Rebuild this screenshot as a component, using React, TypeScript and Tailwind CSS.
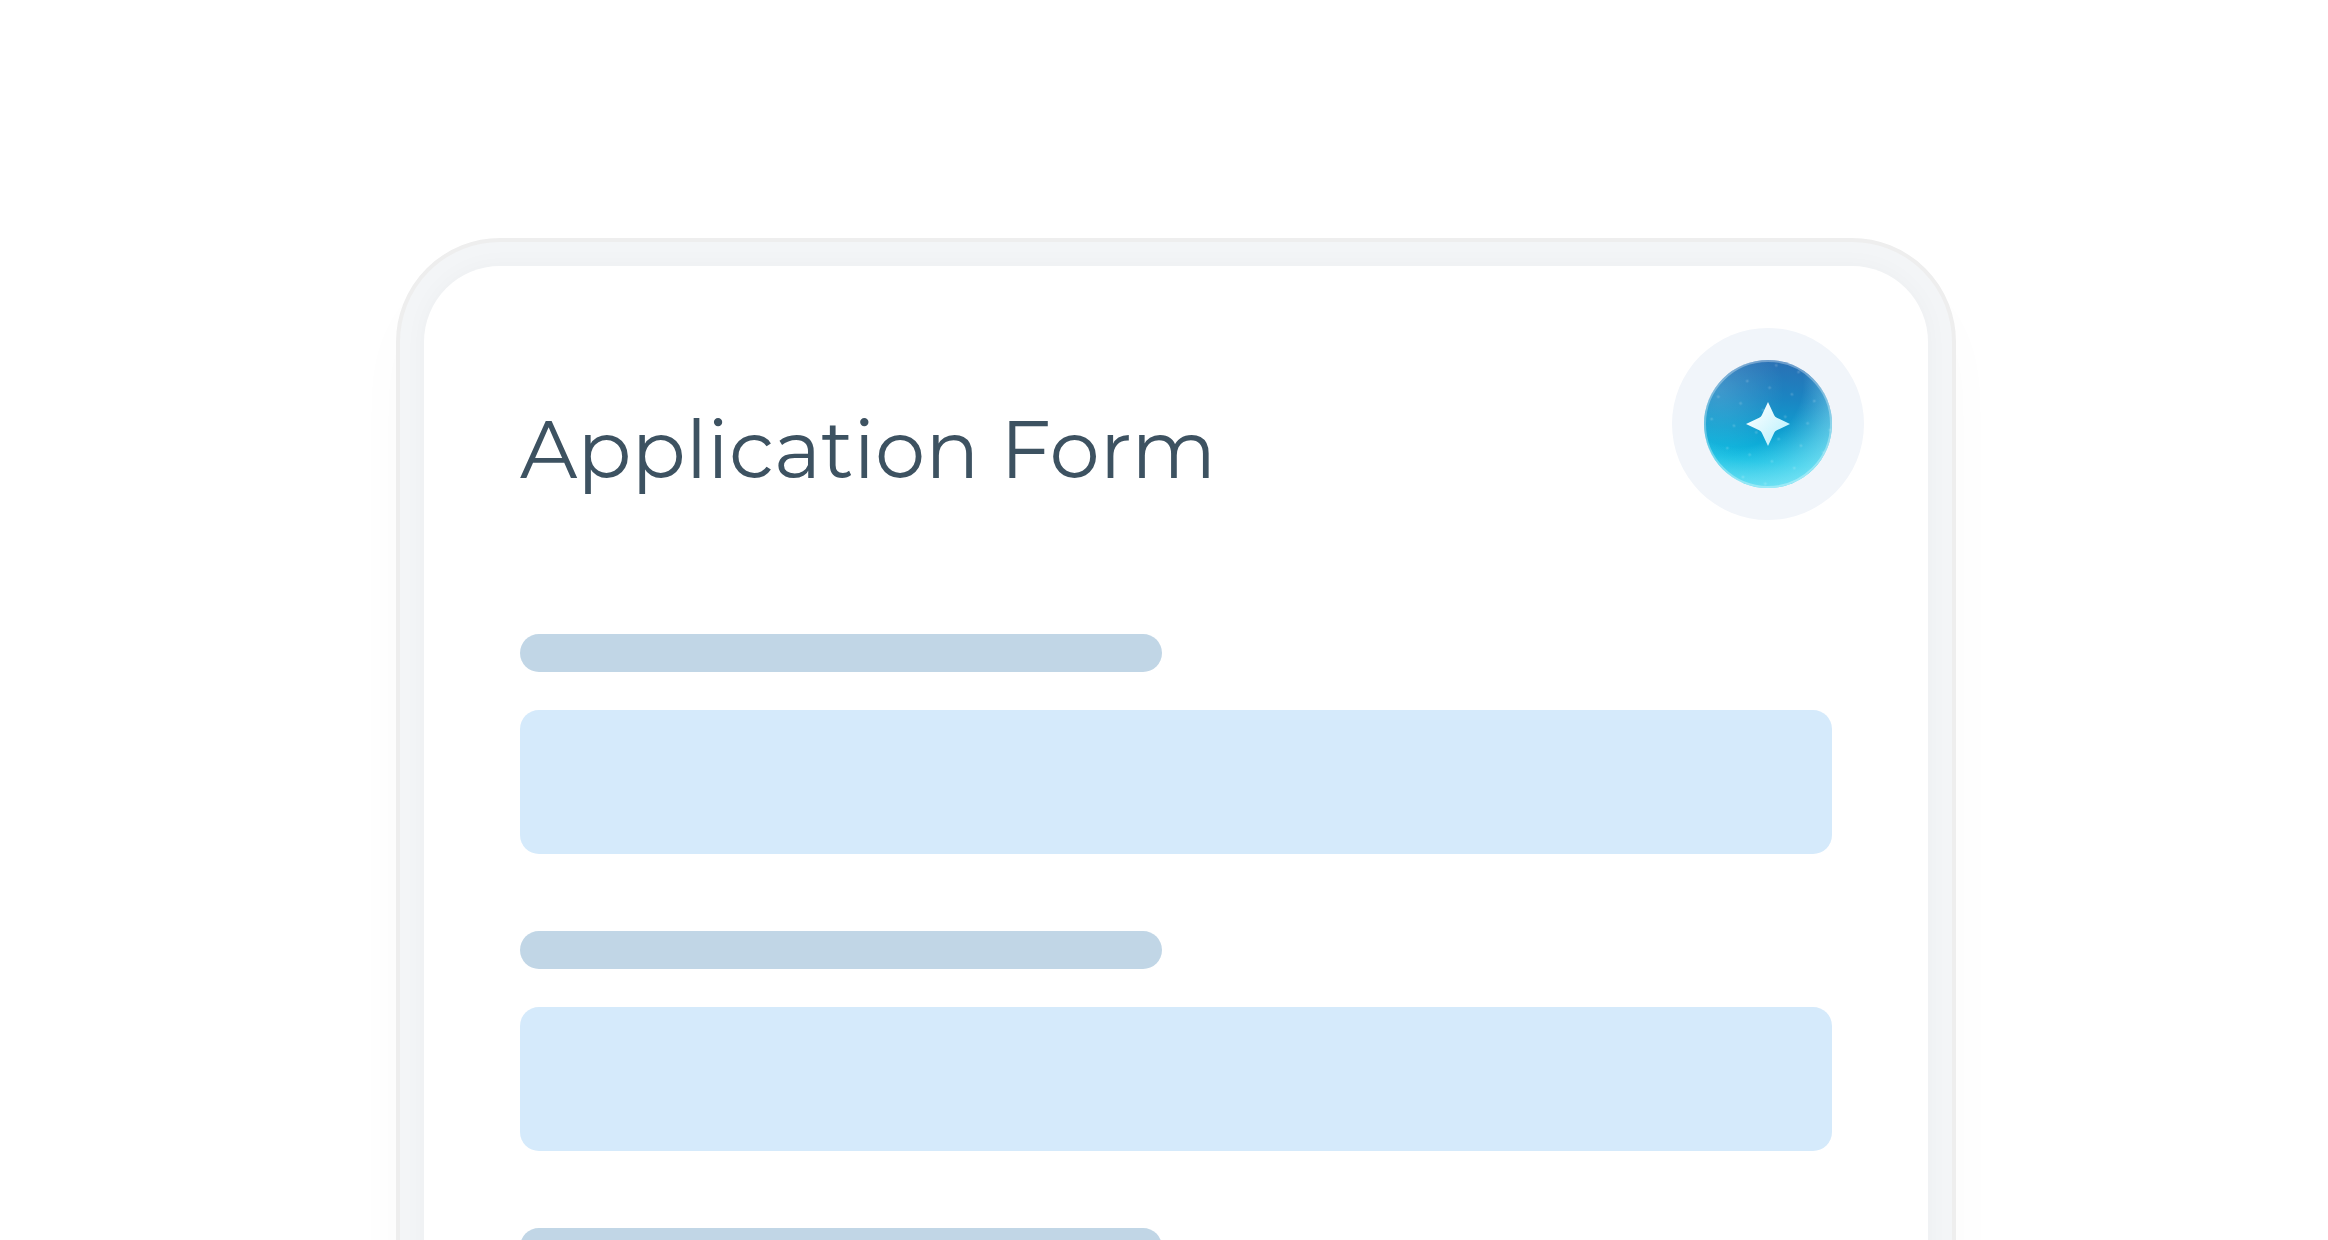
const FIELDS = ['field-1', 'field-2', 'field-3', 'field-4'];

function AssistantOrb() {
  return (
    <svg viewBox="0 0 128 128" className="size-32">
      <defs>
        <linearGradient id="sky" x1="0.55" y1="0" x2="0.45" y2="1">
          <stop offset="0" stopColor="#2a70b4" />
          <stop offset="0.3" stopColor="#1a86c3" />
          <stop offset="0.55" stopColor="#0f9fd0" />
          <stop offset="0.8" stopColor="#0dbce1" />
          <stop offset="1" stopColor="#2fcdea" />
        </linearGradient>
        <radialGradient id="glow" gradientUnits="userSpaceOnUse" cx="34" cy="22" r="116">
          <stop offset="0.56" stopColor="#a5f3fc" stopOpacity="0" />
          <stop offset="0.82" stopColor="#a5f3fc" stopOpacity="0.38" />
          <stop offset="1" stopColor="#a5f3fc" stopOpacity="0.6" />
        </radialGradient>
        <radialGradient id="haze" gradientUnits="userSpaceOnUse" cx="14" cy="30" r="66">
          <stop offset="0" stopColor="#fff" stopOpacity="0.16" />
          <stop offset="1" stopColor="#fff" stopOpacity="0" />
        </radialGradient>
        <linearGradient id="spark" x1="0" y1="0" x2="1" y2="1">
          <stop offset="0.2" stopColor="#f5fdff" />
          <stop offset="0.8" stopColor="#c2f2fd" />
        </linearGradient>
        <pattern
          id="stars"
          width="23.3"
          height="23.3"
          patternUnits="userSpaceOnUse"
          patternTransform="translate(43.3 21) rotate(16.6) translate(-11.65 -11.65)"
        >
          <circle cx="11.65" cy="11.65" r="1.5" fill="#fff" fillOpacity="0.14" />
        </pattern>
      </defs>
      <circle cx="64" cy="64" r="64" fill="url(#sky)" />
      <circle cx="64" cy="64" r="64" fill="url(#haze)" />
      <circle cx="64" cy="64" r="64" fill="url(#glow)" />
      <circle cx="64" cy="64" r="64" fill="url(#stars)" />
      <circle cx="64" cy="64" r="63" fill="none" stroke="#fff" strokeOpacity="0.32" strokeWidth="2" />
      <path
        d="M64 42 70.2 55.2Q71 57 72.8 57.8L86 64 72.8 70.2Q71 71 70.2 72.8L64 86 57.8 72.8Q57 71 55.2 70.2L42 64 55.2 57.8Q57 57 57.8 55.2Z"
        fill="url(#spark)"
      />
    </svg>
  );
}

function Field({ id }: { id: string }) {
  return (
    <div className="flex flex-col gap-[38px]">
      <label htmlFor={id} className="block h-[38px] w-[642px] max-w-full rounded-full bg-[#c1d6e6]" />
      <input
        id={id}
        type="text"
        className="block h-36 w-full rounded-[19px] bg-[#d5eafb] px-8 text-4xl text-[#3d5261] outline-none"
      />
    </div>
  );
}

export default function App() {
  return (
    <main className="h-screen overflow-hidden bg-white pt-[238px] pr-[372px] pl-[396px] font-['Montserrat',sans-serif]">
      <div className="rounded-[104px] border-4 border-[#eeeeee] bg-[#f3f5f7] p-6 shadow-[0_40px_60px_rgba(0,0,0,0.02)]">
        <div className="rounded-[76px] bg-white pt-[62px] pb-24 shadow-[0_0_24px_rgba(0,0,0,0.03)]">
          <header className="flex items-end justify-between pr-16 pl-24">
            <h1 className="pb-5 text-[80px] leading-[100px] text-[#3d5261]">Application Form</h1>
            <button type="button" className="rounded-full bg-[#f1f5fa] p-8">
              <AssistantOrb />
            </button>
          </header>

          <form className="mt-[114px] flex flex-col gap-[77px] px-24">
            {FIELDS.map(id => <Field key={id} id={id} />)}
          </form>
        </div>
      </div>
    </main>
  );
}
